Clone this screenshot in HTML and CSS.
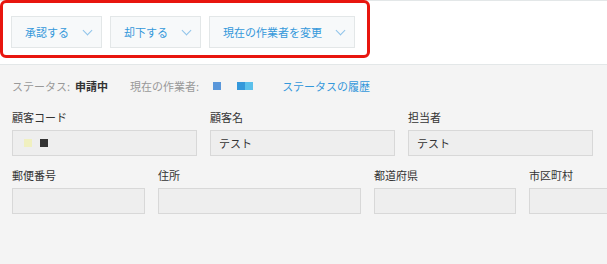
FILE: index.html
```html
<!DOCTYPE html>
<html lang="ja">
  <head>
    <meta charset="UTF-8" />
    <title>レコード詳細</title>
    <link rel="stylesheet" href="styles.css">
  </head>
  <body>
    <div class="toolbar">
      <button class="action">承認する<span class="chevron"></span></button>
      <button class="action">却下する<span class="chevron"></span></button>
      <button class="action">現在の作業者を変更<span class="chevron"></span></button>
      <div class="highlight"></div>
    </div>

    <div class="status">
      <span class="status_label">ステータス:</span>
      <span class="status_value">申請中</span>
      <span class="status_label worker_label">現在の作業者:</span>
      <span class="avatar avatar_one"></span>
      <span class="avatar avatar_two"></span><span class="avatar avatar_three"></span>
      <a class="history" href="#">ステータスの履歴</a>
    </div>

    <div class="fields row_one">
      <div class="field">
        <label>顧客コード</label>
        <div class="input"><span class="swatch swatch_light"></span><span class="swatch swatch_dark"></span></div>
      </div>
      <div class="field">
        <label>顧客名</label>
        <div class="input">テスト</div>
      </div>
      <div class="field">
        <label>担当者</label>
        <div class="input">テスト</div>
      </div>
    </div>

    <div class="fields row_two">
      <div class="field">
        <label>郵便番号</label>
        <div class="input"></div>
      </div>
      <div class="field">
        <label>住所</label>
        <div class="input"></div>
      </div>
      <div class="field">
        <label>都道府県</label>
        <div class="input"></div>
      </div>
      <div class="field">
        <label>市区町村</label>
        <div class="input"></div>
      </div>
    </div>
  </body>
</html>
```

FILE: styles.css
```css
body {
  margin: 0;
  background-color: #f4f4f4;
  font-family: "Noto Sans CJK JP", "Noto Sans", sans-serif;
  font-size: 11px;
  color: #333333;
  overflow: hidden;
}

.toolbar {
  position: relative;
  display: flex;
  gap: 8px;
  height: 32px;
  padding: 15px 11px 16px;
  background-color: #ffffff;
  border-top: 1px solid #e3e7e8;
  border-bottom: 1px solid #e3e7e8;
}

.action {
  display: flex;
  align-items: center;
  height: 32px;
  padding: 0 10px 0 13px;
  background-color: #f7f9fa;
  border: 1px solid #e3e7e8;
  color: #3498db;
  font-family: inherit;
  font-size: 11px;
}

.chevron {
  width: 6px;
  height: 6px;
  margin-left: 15px;
  margin-top: -4px;
  border-right: 1px solid #8fc3ea;
  border-bottom: 1px solid #8fc3ea;
  transform: rotate(45deg);
}

.highlight {
  position: absolute;
  left: 0;
  top: -1px;
  width: 364px;
  height: 52px;
  border: 3.5px solid #e8160f;
  border-radius: 6px;
}

.status {
  display: flex;
  align-items: center;
  height: 20px;
  padding: 11px 12px 0;
  color: #999999;
}

.status_value {
  margin-left: 5px;
  color: #333333;
  font-weight: bold;
}

.worker_label {
  margin-left: 22px;
}

.avatar {
  display: inline-block;
  width: 8px;
  height: 8px;
}

.avatar_one {
  margin-left: 14px;
  background-color: #5a97da;
}

.avatar_two {
  margin-left: 16px;
  background-color: #3498db;
}

.avatar_three {
  background-color: #5bc0eb;
}

.history {
  margin-left: 29px;
  color: #3498db;
  text-decoration: none;
}

.fields {
  display: grid;
  padding: 0 12px;
}

.row_one {
  grid-template-columns: 185px 185px 185px;
  column-gap: 13px;
  margin-top: 13px;
}

.row_two {
  grid-template-columns: 133px 203px 142px 80px;
  column-gap: 13px;
  margin-top: 11px;
}

.field label {
  display: block;
  height: 16px;
  line-height: 16px;
  margin-bottom: 5px;
}

.input {
  display: flex;
  align-items: center;
  height: 24px;
  padding: 0 8px;
  background-color: #eeeeee;
  border: 1px solid #d8d8d8;
}

.row_two .field:last-child .input {
  border-right: none;
}

.swatch {
  display: inline-block;
  width: 8px;
  height: 8px;
  margin-left: 3px;
}

.swatch_light {
  background-color: #f0f0c0;
}

.swatch_dark {
  margin-left: 8px;
  background-color: #333333;
}
```
